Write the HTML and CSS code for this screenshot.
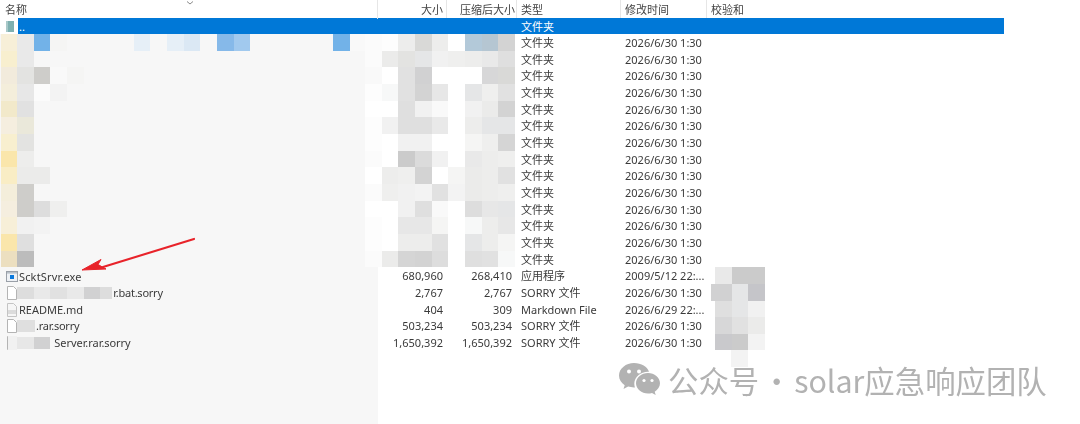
FILE: index.html
```html
<!DOCTYPE html>
<html lang="zh-CN">
<head>
<meta charset="utf-8">
<title>文件列表</title>
<link rel="stylesheet" href="styles.css">
</head>
<body>
<main class="page">
  <header class="cols head">
    <div class="hc hname">名称<svg class="sort" width="8" height="4" viewBox="0 0 8 4"><path d="M1 .5 4 3 7 .5" fill="none" stroke="#8a8a8a"/></svg></div>
    <div class="hc num hsize">大小</div>
    <div class="hc num hcomp">压缩后大小</div>
    <div class="hc htype">类型</div>
    <div class="hc hdate">修改时间</div>
    <div class="hc hsum">校验和</div>
  </header>

  <div class="up">
    <svg class="upicon" width="18" height="16" viewBox="0 0 18 16"><rect x="6" y="3" width="8" height="11" fill="#7fb0b0"/><rect x="6" y="3" width="2" height="11" fill="#a9c9c9"/></svg>
    <div class="upbar"><span class="upname">..</span><span class="uptype">文件夹</span></div>
  </div>

  <div class="row folder">
    <div class="nm"><i class="m first y1"></i><i class="m ge9"></i><i class="m b1"></i><i class="m gf5"></i><i class="m"></i><i class="m"></i><i class="m"></i><i class="m"></i><i class="m b5"></i><i class="m"></i><i class="m b5"></i><i class="m b6"></i><i class="m"></i><i class="m b2"></i><i class="m b3"></i><i class="m"></i><i class="m"></i><i class="m"></i><i class="m"></i><i class="m"></i><i class="m b1"></i><i class="m gf9"></i></div>
    <div class="strip"><i class="m gfb"></i><i class="m gfd"></i><i class="m ged"></i><i class="m gd9"></i><i class="m ged"></i><i class="m gff"></i><i class="m b7"></i><i class="m b8"></i><i class="m gd3"></i></div>
    <div class="ty">文件夹</div><div class="dt">2026/6/30 1:30</div>
  </div>
  <div class="row folder">
    <div class="nm"><i class="m first y2"></i><i class="m ge9"></i></div>
    <div class="strip"><i class="m gfb"></i><i class="m geb"></i><i class="m ge3"></i><i class="m ge5"></i><i class="m gf1"></i><i class="m gef"></i><i class="m ged"></i><i class="m ge9"></i><i class="m gdf"></i></div>
    <div class="ty">文件夹</div><div class="dt">2026/6/30 1:30</div>
  </div>
  <div class="row folder">
    <div class="nm"><i class="m first y3"></i><i class="m ge3"></i><i class="m gcd"></i><i class="m gf9"></i><i class="m gf5"></i></div>
    <div class="strip"><i class="m gf9"></i><i class="m gff"></i><i class="m ge1"></i><i class="m gd1"></i><i class="m gff"></i><i class="m gff"></i><i class="m gff"></i><i class="m gd7"></i><i class="m gd9"></i></div>
    <div class="ty">文件夹</div><div class="dt">2026/6/30 1:30</div>
  </div>
  <div class="row folder">
    <div class="nm"><i class="m first y4"></i><i class="m ge7"></i><i class="m gfb"></i><i class="m gf3"></i></div>
    <div class="strip"><i class="m gfd"></i><i class="m gf7"></i><i class="m ge1"></i><i class="m gd3"></i><i class="m ge7"></i><i class="m gff"></i><i class="m ge5"></i><i class="m gef"></i><i class="m ge1"></i></div>
    <div class="ty">文件夹</div><div class="dt">2026/6/30 1:30</div>
  </div>
  <div class="row folder">
    <div class="nm"><i class="m first y5"></i><i class="m ge1"></i></div>
    <div class="strip"><i class="m gff"></i><i class="m gff"></i><i class="m gdf"></i><i class="m gf1"></i><i class="m gf9"></i><i class="m gff"></i><i class="m gf1"></i><i class="m geb"></i><i class="m gd3"></i></div>
    <div class="ty">文件夹</div><div class="dt">2026/6/30 1:30</div>
  </div>
  <div class="row folder">
    <div class="nm"><i class="m first y6"></i><i class="m y7"></i></div>
    <div class="strip"><i class="m gfd"></i><i class="m gf1"></i><i class="m gdf"></i><i class="m gdf"></i><i class="m ge9"></i><i class="m gff"></i><i class="m ged"></i><i class="m ge5"></i><i class="m ge5"></i></div>
    <div class="ty">文件夹</div><div class="dt">2026/6/30 1:30</div>
  </div>
  <div class="row folder">
    <div class="nm"><i class="m first y2"></i><i class="m ge3"></i></div>
    <div class="strip"><i class="m gfd"></i><i class="m gff"></i><i class="m gf1"></i><i class="m gf1"></i><i class="m gff"></i><i class="m gff"></i><i class="m gf5"></i><i class="m gef"></i><i class="m gd5"></i></div>
    <div class="ty">文件夹</div><div class="dt">2026/6/30 1:30</div>
  </div>
  <div class="row folder">
    <div class="nm"><i class="m first y8"></i><i class="m ged"></i></div>
    <div class="strip"><i class="m gfb"></i><i class="m gff"></i><i class="m gcb"></i><i class="m gdb"></i><i class="m gf1"></i><i class="m gff"></i><i class="m ge9"></i><i class="m ged"></i><i class="m gef"></i></div>
    <div class="ty">文件夹</div><div class="dt">2026/6/30 1:30</div>
  </div>
  <div class="row folder">
    <div class="nm"><i class="m first y9"></i><i class="m geb"></i><i class="m geb"></i></div>
    <div class="strip"><i class="m gff"></i><i class="m ged"></i><i class="m gef"></i><i class="m gd3"></i><i class="m gff"></i><i class="m gf5"></i><i class="m geb"></i><i class="m ged"></i><i class="m ge1"></i></div>
    <div class="ty">文件夹</div><div class="dt">2026/6/30 1:30</div>
  </div>
  <div class="row folder">
    <div class="nm"><i class="m first y4"></i><i class="m gcd"></i></div>
    <div class="strip"><i class="m gfb"></i><i class="m gef"></i><i class="m gf1"></i><i class="m gf3"></i><i class="m ge1"></i><i class="m gf3"></i><i class="m geb"></i><i class="m ged"></i><i class="m gef"></i></div>
    <div class="ty">文件夹</div><div class="dt">2026/6/30 1:30</div>
  </div>
  <div class="row folder">
    <div class="nm"><i class="m first y6"></i><i class="m gcd"></i><i class="m gdd"></i><i class="m gef"></i></div>
    <div class="strip"><i class="m gff"></i><i class="m gff"></i><i class="m gf1"></i><i class="m gdf"></i><i class="m gf9"></i><i class="m gff"></i><i class="m gdd"></i><i class="m ge7"></i><i class="m ge5"></i></div>
    <div class="ty">文件夹</div><div class="dt">2026/6/30 1:30</div>
  </div>
  <div class="row folder">
    <div class="nm"><i class="m first y1"></i><i class="m gf1"></i><i class="m gf3"></i></div>
    <div class="strip"><i class="m gfd"></i><i class="m gff"></i><i class="m ge7"></i><i class="m ge7"></i><i class="m gf5"></i><i class="m gff"></i><i class="m gf7"></i><i class="m ged"></i><i class="m ge7"></i></div>
    <div class="ty">文件夹</div><div class="dt">2026/6/30 1:30</div>
  </div>
  <div class="row folder">
    <div class="nm"><i class="m first y8"></i><i class="m gdf"></i></div>
    <div class="strip"><i class="m gfd"></i><i class="m gff"></i><i class="m ged"></i><i class="m ged"></i><i class="m ge1"></i><i class="m gff"></i><i class="m ge5"></i><i class="m ged"></i><i class="m gf5"></i></div>
    <div class="ty">文件夹</div><div class="dt">2026/6/30 1:30</div>
  </div>
  <div class="row folder">
    <div class="nm"><i class="m first y10"></i><i class="m gbd"></i></div>
    <div class="strip"><i class="m gfb"></i><i class="m geb"></i><i class="m gd5"></i><i class="m gd3"></i><i class="m gdd"></i><i class="m gff"></i><i class="m gdf"></i><i class="m ge1"></i><i class="m gf7"></i></div>
    <div class="ty">文件夹</div><div class="dt">2026/6/30 1:30</div>
  </div>

  <div class="row file">
    <div class="fn"><svg class="ico" width="12" height="12" viewBox="0 0 12 12"><rect x=".5" y=".5" width="11" height="10" fill="#eef1f5" stroke="#9aa0a8"/><rect x="1" y="1" width="10" height="1.6" fill="#b9c0c8"/><rect x="4" y="4" width="4" height="4" fill="#0a78dc"/></svg><span class="loose">ScktSrvr.exe</span></div>
    <div class="sz">680,960</div><div class="sz">268,410</div><div class="ty">应用程序</div><div class="dt">2009/5/12 22:...</div>
    <div class="sum"><i class="m ge9"></i><i class="m gcb"></i><i class="m gcb"></i></div>
  </div>
  <div class="row file">
    <div class="fn"><svg class="ico" width="12" height="14" viewBox="0 0 12 14"><path d="M1.5.5h6l3 3v10h-9z" fill="#fff" stroke="#b4b4b4"/></svg><i class="m gdd tight"></i><i class="m ge9"></i><i class="m ge1"></i><i class="m ge9"></i><i class="m gd1"></i><i class="m gdd part"></i><span class="snug">r.bat.sorry</span></div>
    <div class="sz">2,767</div><div class="sz">2,767</div><div class="ty">SORRY 文件</div><div class="dt">2026/6/30 1:30</div>
    <div class="sum"><i class="m gd1 wide"></i><i class="m ge5"></i><i class="m gc5"></i></div>
  </div>
  <div class="row file">
    <div class="fn"><svg class="ico" width="12" height="14" viewBox="0 0 12 14"><path d="M1.5.5h6l3 3v10h-9z" fill="#f6f6f6" stroke="#c4c4c4"/><path d="M2.5 8h7M2.5 10h7" stroke="#8c8c8c" stroke-dasharray="1 1"/></svg><span>README.md</span></div>
    <div class="sz">404</div><div class="sz">309</div><div class="ty">Markdown File</div><div class="dt">2026/6/29 22:...</div>
    <div class="sum"><i class="m gdf"></i><i class="m ge5"></i><i class="m gf1"></i></div>
  </div>
  <div class="row file">
    <div class="fn"><svg class="ico" width="12" height="14" viewBox="0 0 12 14"><path d="M1.5.5h6l3 3v10h-9z" fill="#fff" stroke="#b4b4b4"/></svg><i class="m gdf tight short"></i><span class="snug">.rar.sorry</span></div>
    <div class="sz">503,234</div><div class="sz">503,234</div><div class="ty">SORRY 文件</div><div class="dt">2026/6/30 1:30</div>
    <div class="sum"><i class="m gd7"></i><i class="m ge1"></i><i class="m geb"></i></div>
  </div>
  <div class="row file">
    <div class="fn"><svg class="ico" width="12" height="14" viewBox="0 0 12 14"><path d="M1.5.5h6l3 3v10h-9z" fill="#fff" stroke="#b4b4b4"/></svg><i class="m gf1 over"></i><i class="m ge7"></i><i class="m gd1"></i><span class="after">Server.rar.sorry</span></div>
    <div class="sz">1,650,392</div><div class="sz">1,650,392</div><div class="ty">SORRY 文件</div><div class="dt">2026/6/30 1:30</div>
    <div class="sum"><i class="m gc9"></i><i class="m gcb"></i><i class="m gf3"></i></div>
  </div>
  <div class="tail"><div class="panel"></div><i class="m gf3 tailblock"></i></div>

  <svg class="arrow" width="130" height="50" viewBox="0 0 130 50"><path d="M113 3 22 31" stroke="#e8232a" stroke-width="2.2" stroke-linecap="round"/><path d="M1 34 20 23.500 17 28.500 25 33z" fill="#e8232a" stroke="#e8232a" stroke-linejoin="round"/></svg>

  <aside class="mark">
    <svg class="wx" width="42" height="34" viewBox="0 0 42 34"><path d="M15 0C7 0 0 5.500 0 12.500c0 4 2.300 7.400 5.700 9.700L4.500 26l4.600-2.400c1.700.5 3.600.8 5.900.8h.9c-.4-1.200-.6-2.500-.6-3.800 0-6.600 6.400-11.800 13.700-11.800h1C28.500 3.500 22.300 0 15 0z" fill="#b2b2b2"/><path d="M41 20.300c0-5.700-5.600-10.300-12-10.300s-12 4.600-12 10.300 5.600 10.300 12 10.300c1.400 0 2.700-.2 4-.6l3.700 2.100-1-3.400c3.100-2.100 5.300-5 5.300-8.400z" fill="#b2b2b2"/><circle cx="10" cy="8.500" r="2" fill="#fff"/><circle cx="20" cy="8.500" r="2" fill="#fff"/><circle cx="25" cy="17.500" r="1.600" fill="#fff"/><circle cx="33" cy="17.500" r="1.600" fill="#fff"/></svg>
    <span class="marktext">公众号 · solar应急响应团队</span>
  </aside>
</main>
</body>
</html>
```

FILE: styles.css
```css
* { box-sizing: border-box; }
html, body { margin: 0; padding: 0; background: #fff; }
body { width: 1080px; height: 424px; overflow: hidden; }

.page {
  position: relative;
  display: flex;
  flex-direction: column;
  width: 1080px;
  height: 424px;
  overflow: hidden;
  font-family: "Noto Sans", "Noto Sans CJK SC", sans-serif;
  font-size: 11px;
  color: #3a3a3a;
  filter: blur(.3px);
}

/* header */
.cols { display: grid; grid-template-columns: 378px 69px 70px 104px 86px 297px; }
.head { width: 1004px; height: 18px; flex: none; line-height: 19px; color: #444; }
.hc { border-right: 1px solid #e6e6e6; padding-left: 4px; }
.hname { position: relative; padding-left: 5px; }
.sort { position: absolute; left: 186px; top: 1px; }
.num { text-align: right; padding-right: 3px; padding-left: 0; }
.hcomp { padding-right: 1px; }
.hsum { border-right: 0; }

/* parent row */
.up { display: flex; height: 16px; flex: none; }
.upicon { flex: none; }
.upbar { display: flex; width: 986px; background: #0078d7; color: #fff; line-height: 18px; }
.upname { width: 503px; padding-left: 1px; }

/* rows */
.row { display: grid; height: 16.67px; flex: none; line-height: 18px; white-space: nowrap; }
.folder { grid-template-columns: 365px 152px 104px 86px 1fr; }
.file { grid-template-columns: 378px 69px 70px 104px 86px 1fr; }

.nm, .strip, .sum, .fn { display: flex; background: #f7f7f7; height: 16.67px; }
.nm { padding-left: 1px; overflow: hidden; }
.strip { background: #fff; }
.ty { padding-left: 4px; }
.dt { padding-left: 4px; overflow: hidden; }
.sz { text-align: right; padding-right: 4px; }
.fn { align-items: center; padding: 2px 0 0 6px; }
.file .sz:nth-child(3) { padding-right: 5px; }
.ico { flex: none; }
.sum { background: transparent; padding-left: 8px; }

/* mosaic */
.m { display: block; flex: none; width: 16.67px; height: 16.67px; }
.m.first { width: 16px; }
.fn .m { height: 12px; }
.fn .m.tight { margin-left: -1px; }
.fn .m.part { width: 12px; }
.fn .m.short { width: 18px; }
.fn .m.over { width: 9px; height: 15px; margin-left: -10px; }
.sum .m.wide { width: 20.67px; margin-left: -4px; }
.after { margin-left: 3px; letter-spacing: -.05px; }
.fn span { padding-left: 1px; }
.loose { letter-spacing: .15px; }
.snug { letter-spacing: -.25px; }

.gff { background: #fff; } .gfd { background: #fdfdfd; } .gfb { background: #fbfbfb; }
.gf9 { background: #f9f9f9; } .gf7 { background: #f7f8f8; } .gf5 { background: #f5f5f4; }
.gf3 { background: #f3f3f3; } .gf1 { background: #f1f1f1; } .gef { background: #efefee; }
.ged { background: #ededec; } .geb { background: #ebebea; } .ge9 { background: #e9e9e9; }
.ge7 { background: #e7e7e7; } .ge5 { background: #e5e6e7; } .ge3 { background: #e3e3e1; }
.ge1 { background: #e1e1e1; } .gdf { background: #dfdfdf; } .gdd { background: #dddddd; }
.gdb { background: #dbdbdb; } .gd9 { background: #d9d9d7; } .gd7 { background: #d7d7d8; }
.gd5 { background: #d5d5d5; } .gd3 { background: #d3d3d3; } .gd1 { background: #d1d1d2; }
.gcd { background: #cecdca; } .gcb { background: #cbcbcb; } .gc9 { background: #c9c9cc; }
.gc5 { background: #c5c5c9; } .gbd { background: #bcbcbc; }

.y1 { background: #f7efd8; } .y2 { background: #f8efcf; } .y3 { background: #f2ebdc; }
.y4 { background: #f4eedb; } .y5 { background: #f2e9ca; } .y6 { background: #f5eedf; }
.y7 { background: #eae8da; } .y8 { background: #fae6ab; } .y9 { background: #f9edc5; }
.y10 { background: #ecdfc0; }

.b1 { background: #72b2e8; } .b2 { background: #86b9e9; } .b3 { background: #a1c9ee; }
.b5 { background: #e6eff7; } .b6 { background: #dbe8f4; } .b7 { background: #b3c9d9; }
.b8 { background: #b5c6d2; }

.tail { flex: 1; display: flex; align-items: flex-start; }
.panel { width: 378px; height: 100%; background: #f7f7f7; }
.tailblock { margin-left: 353px; }

/* overlays */
.arrow { position: absolute; left: 81px; top: 236px; }
.mark {
  position: absolute;
  left: 619px;
  top: 362px;
  display: flex;
  align-items: center;
  gap: 7px;
  height: 36px;
  color: #b2b2b2;
  white-space: nowrap;
}
.wx { flex: none; }
.marktext { font-family: "Noto Sans CJK SC", "Noto Sans", sans-serif; font-size: 30.4px; line-height: 36px; word-spacing: -4.5px; }
```
